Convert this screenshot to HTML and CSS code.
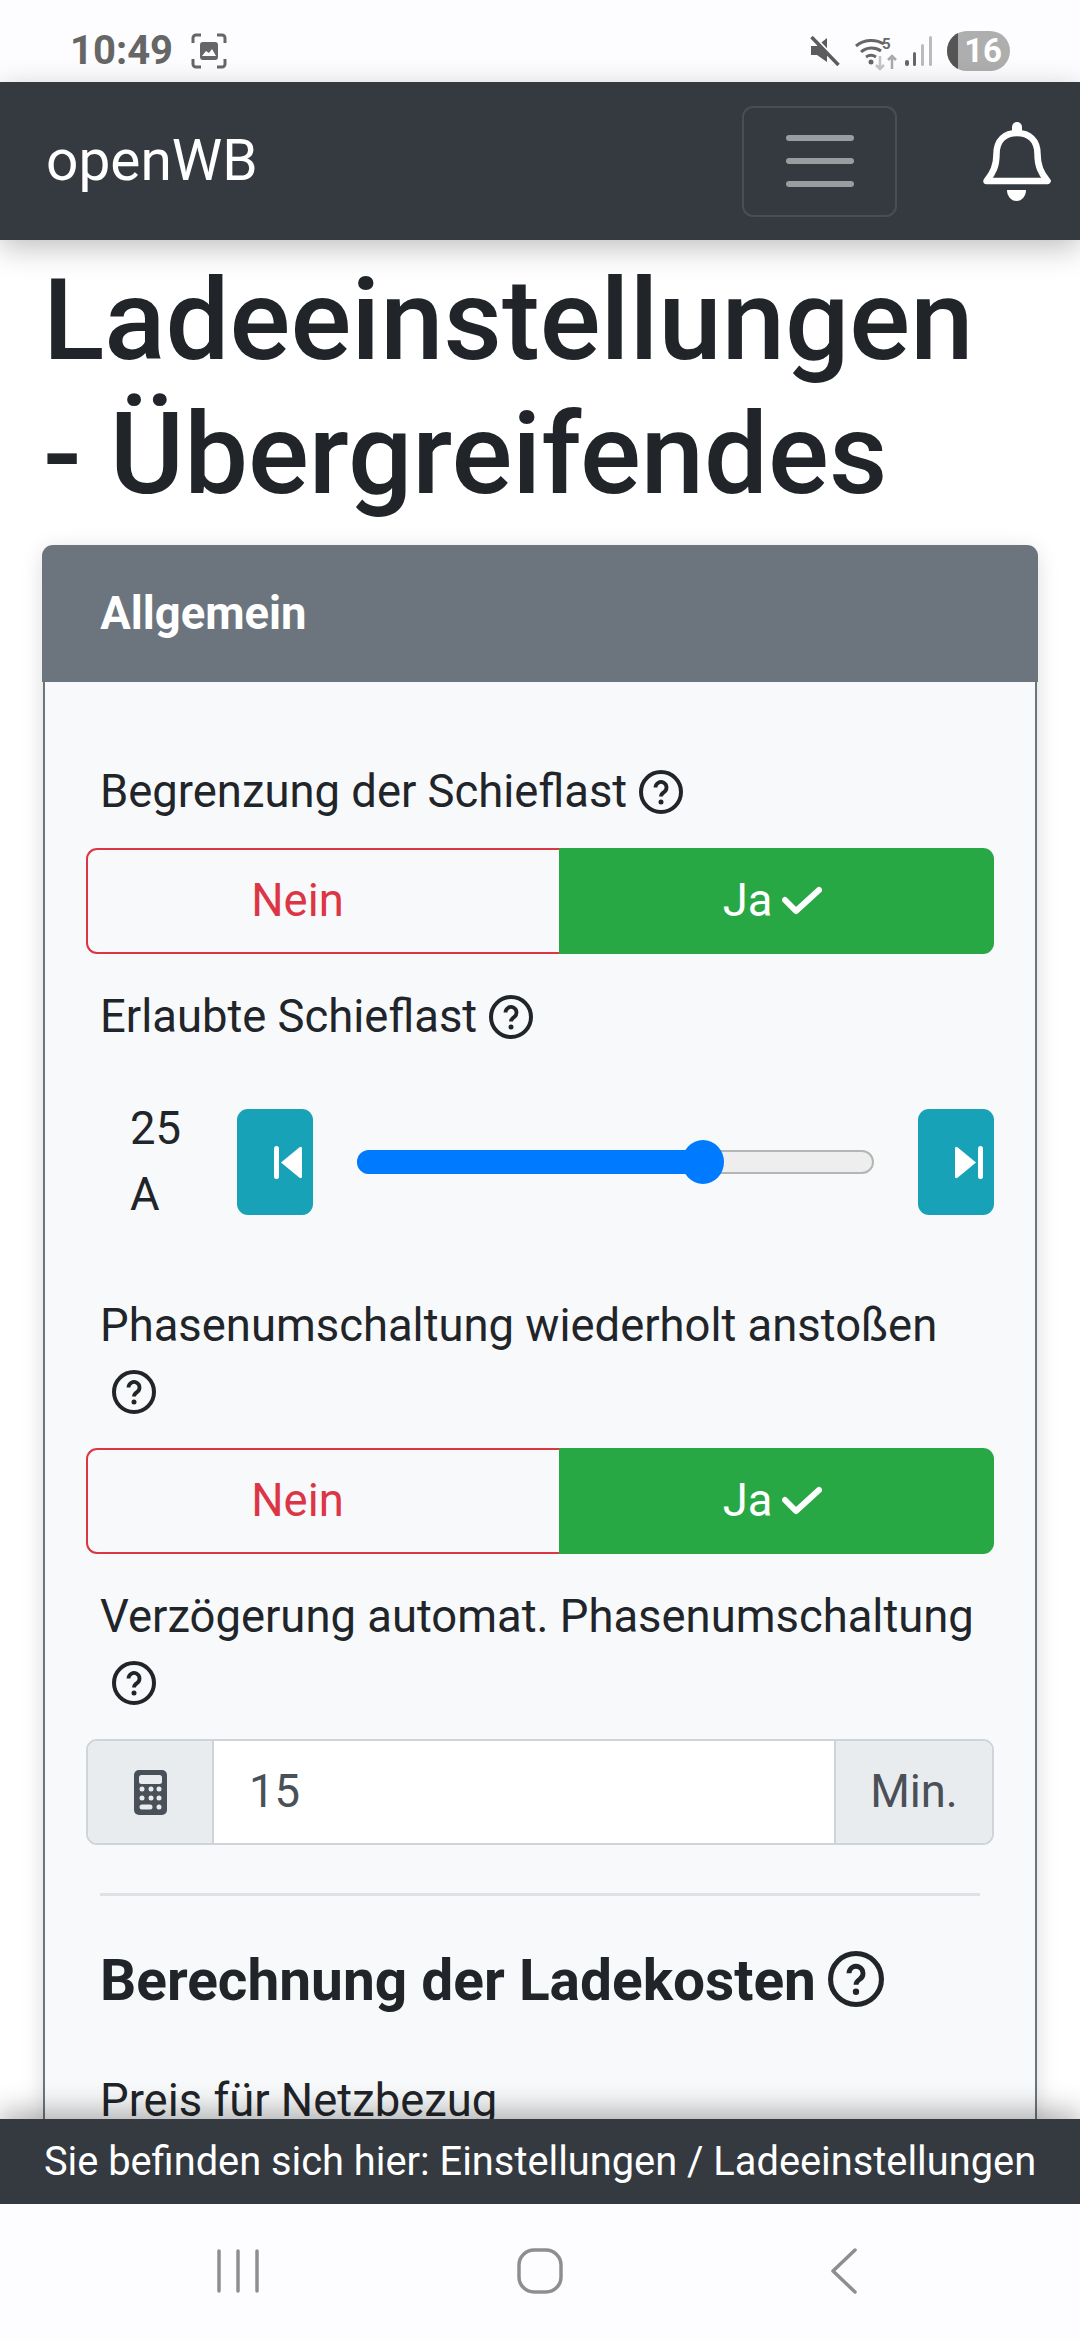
FILE: index.html
```html
<!DOCTYPE html>
<html lang="de">
<head>
    <meta charset="UTF-8">
    <meta name="viewport" content="width=device-width, initial-scale=1.0">
    <title>openWB</title>
    <link rel="stylesheet" href="styles.css">
</head>
<body>
<div class="screen">
    <!-- Statusleiste -->
    <div class="status-bar">
        <span class="time">10:49</span>
        <svg class="shot-icon" viewBox="0 0 36 36">
            <path d="M2 10V5a3 3 0 0 1 3-3h5M26 2h5a3 3 0 0 1 3 3v5M34 26v5a3 3 0 0 1-3 3h-5M10 34H5a3 3 0 0 1-3-3v-5" fill="none" stroke="#666" stroke-width="3"/>
            <rect x="9" y="9" width="18" height="18" rx="3" fill="#666"/>
            <path d="M11 23l4-5 3 2 3-4 4 7z" fill="#fdfcff"/>
        </svg>
        <span class="status-space"></span>
        <svg class="mute-icon" viewBox="0 0 30 30">
            <path d="M1 10h6l10-8v24L7 19H1z" fill="#5c5c5c"/>
            <path d="M3.500 0l26 28" stroke="#fdfcff" stroke-width="3"/>
            <path d="M1.500 1l27 28" stroke="#5c5c5c" stroke-width="3.500"/>
        </svg>
        <svg class="wifi-icon" viewBox="0 0 44 38">
            <path d="M1 12a24 24 0 0 1 28-2M6 18a16 16 0 0 1 20-1M11 23a9 9 0 0 1 10 0" fill="none" stroke="#666" stroke-width="3"/>
            <circle cx="16" cy="28" r="2.500" fill="#666"/>
            <text x="27" y="15" class="wifi-five">5</text>
            <path d="M25 22v13m-4-4l4 4 4-4" fill="none" stroke="#c4c4c4" stroke-width="2.500"/>
            <path d="M37 35V22m-4 4l4-4 4 4" fill="none" stroke="#aaa" stroke-width="2.500"/>
        </svg>
        <svg class="signal-icon" viewBox="0 0 28 32">
            <rect x="0" y="25" width="4" height="6" rx="2" fill="#666"/>
            <rect x="8" y="17" width="3" height="14" rx="1.500" fill="#666"/>
            <rect x="16" y="9" width="3" height="22" rx="1.500" fill="#bbb"/>
            <rect x="24" y="1" width="3" height="30" rx="1.500" fill="#bbb"/>
        </svg>
        <span class="battery"><span class="battery-level"></span>16</span>
    </div>

    <!-- Navigation -->
    <nav class="navbar">
        <span class="brand">openWB</span>
        <span class="toggler"><i></i><i></i><i></i></span>
        <svg class="bell" viewBox="0 0 68 79">
            <rect x="29" y="0" width="10" height="14" rx="5" fill="#fff"/>
            <path d="M3.500 59C10 51 13.500 44 13.500 32 13.500 18 22 11 34 11s20.500 7 20.500 21C54.500 44 58 51 64.500 59z" fill="none" stroke="#fff" stroke-width="6.500" stroke-linejoin="round"/>
            <path d="M24 68h19c0 6-4 11-9.500 11S24 74 24 68z" fill="#fff"/>
        </svg>
    </nav>

    <main class="content">
        <h1>Ladeeinstellungen - Übergreifendes</h1>

        <div class="card">
            <div class="card-header">Allgemein</div>
            <div class="card-body">
                <div class="label">Begrenzung der Schieflast<svg class="help" viewBox="0 0 44 44"><use href="#help-glyph"/></svg></div>
                <div class="btn-group">
                    <span class="btn btn-no">Nein</span>
                    <span class="btn btn-yes">Ja<svg class="check" viewBox="0 0 40 30"><path d="M3 14l11 11L37 4"/></svg></span>
                </div>

                <div class="label">Erlaubte Schieflast<svg class="help" viewBox="0 0 44 44"><use href="#help-glyph"/></svg></div>
                <div class="slider-row">
                    <div class="slider-value">25 A</div>
                    <span class="step-btn"><svg viewBox="0 0 28 33"><rect width="5" height="33" rx="2.500"/><path d="M7 16.500L25.500 1.200Q28 0 28 2.500v28q0 2.500-2.500 1.300z"/></svg></span>
                    <div class="slider">
                        <div class="slider-fill"></div>
                        <div class="slider-thumb"></div>
                    </div>
                    <span class="step-btn"><svg viewBox="0 0 28 33"><rect x="23" width="5" height="33" rx="2.500"/><path d="M21 16.500L2.500 1.200Q0 0 0 2.500v28q0 2.500 2.500 1.300z"/></svg></span>
                </div>

                <div class="label">Phasenumschaltung wiederholt anstoßen<svg class="help" viewBox="0 0 44 44"><use href="#help-glyph"/></svg></div>
                <div class="btn-group">
                    <span class="btn btn-no">Nein</span>
                    <span class="btn btn-yes">Ja<svg class="check" viewBox="0 0 40 30"><path d="M3 14l11 11L37 4"/></svg></span>
                </div>

                <div class="label">Verzögerung automat. Phasenumschaltung<svg class="help" viewBox="0 0 44 44"><use href="#help-glyph"/></svg></div>
                <div class="input-group">
                    <span class="addon addon-icon">
                        <svg class="calc" viewBox="0 0 33 45">
                            <rect width="33" height="45" rx="5" fill="#495057"/>
                            <rect x="5" y="5" width="23" height="9" rx="2.500" fill="#e9ecef"/>
                            <g fill="#e9ecef">
                                <circle cx="8" cy="19" r="2.500"/><circle cx="17" cy="19" r="2.500"/><circle cx="25" cy="19" r="2.500"/>
                                <circle cx="8" cy="28" r="2.500"/><circle cx="17" cy="28" r="2.500"/><circle cx="25" cy="28" r="2.500"/>
                                <rect x="5.500" y="34.500" width="13" height="5" rx="2.500"/><circle cx="25" cy="37" r="2.500"/>
                            </g>
                        </svg>
                    </span>
                    <span class="input-value">15</span>
                    <span class="addon addon-unit">Min.</span>
                </div>

                <hr>

                <h3>Berechnung der Ladekosten<svg class="help help-big" viewBox="0 0 44 44"><use href="#help-glyph"/></svg></h3>
                <div class="label label-last">Preis für Netzbezug</div>
            </div>
        </div>
    </main>

    <div class="breadcrumb">Sie befinden sich hier: Einstellungen / Ladeeinstellungen</div>

    <!-- Android Navigation -->
    <div class="system-nav">
        <svg class="nav-recent" viewBox="0 0 42 44"><path d="M2 2v40M21 2v40M40 2v40" stroke="#8e8e8e" stroke-width="3.500" stroke-linecap="round" fill="none"/></svg>
        <svg class="nav-home" viewBox="0 0 46 46"><rect x="2" y="2" width="42" height="42" rx="15" stroke="#8e8e8e" stroke-width="3.500" fill="none"/></svg>
        <svg class="nav-back" viewBox="0 0 30 46"><path d="M26 2L4 23l22 21" stroke="#8e8e8e" stroke-width="3.500" stroke-linecap="round" stroke-linejoin="round" fill="none"/></svg>
    </div>
</div>

<svg class="defs" aria-hidden="true">
    <defs>
        <g id="help-glyph">
            <circle cx="22" cy="22" r="20" fill="none" stroke="currentColor" stroke-width="4"/>
            <path d="M16.500 17.500a5.500 5.500 0 1 1 8.500 4.600c-2 1.400-3 2.400-3 4.400" fill="none" stroke="currentColor" stroke-width="3.800"/>
            <circle cx="22" cy="32" r="2.500" fill="currentColor"/>
        </g>
    </defs>
</svg>
</body>
</html>
```

FILE: styles.css
```css
* {
    box-sizing: border-box;
}

html, body {
    margin: 0;
    padding: 0;
}

body {
    font-family: Roboto, "Noto Sans", sans-serif;
    font-size: 45.4px;
    line-height: 66px;
    color: #212529;
    background-color: #fff;
}

.screen {
    width: 1080px;
    height: 2340px;
    display: flex;
    flex-direction: column;
    overflow: hidden;
}

.defs {
    display: none;
}

/* Statusleiste */
.status-bar {
    height: 82px;
    flex: none;
    display: flex;
    align-items: center;
    padding: 20px 70px 0 70px;
    background-color: #fdfcff;
}

.time {
    font-size: 40px;
    font-weight: 700;
    line-height: 40px;
    color: #666;
}

.shot-icon {
    width: 36px;
    height: 36px;
    margin-left: 18px;
}

.status-space {
    flex: 1;
}

.mute-icon {
    width: 30px;
    height: 30px;
}

.wifi-icon {
    width: 44px;
    height: 38px;
    margin-left: 15px;
    margin-top: 4px;
}

.wifi-five {
    font-size: 15px;
    font-weight: 700;
    fill: #666;
}

.signal-icon {
    width: 28px;
    height: 32px;
    margin-left: 6px;
}

.battery {
    position: relative;
    width: 63px;
    height: 40px;
    margin-left: 14px;
    border-radius: 20px;
    overflow: hidden;
    background-color: #aeaeae;
    color: #fff;
    font-size: 33px;
    font-weight: 700;
    line-height: 40px;
    text-align: right;
    padding-right: 8px;
}

.battery-level {
    position: absolute;
    left: 0;
    top: 0;
    bottom: 0;
    width: 11px;
    background-color: #555;
}

/* Navigation */
.navbar {
    height: 158px;
    flex: none;
    position: relative;
    z-index: 2;
    display: flex;
    align-items: center;
    padding-left: 46px;
    background-color: #343a40;
    box-shadow: 0 8px 28px rgba(0, 0, 0, 0.25);
}

.brand {
    font-size: 56.8px;
    line-height: 66px;
    color: #fff;
    flex: 1;
}

.toggler {
    width: 155px;
    height: 111px;
    display: flex;
    flex-direction: column;
    justify-content: center;
    align-items: center;
    gap: 17px;
    border: 2.75px solid rgba(255, 255, 255, 0.1);
    border-radius: 11px;
}

.toggler i {
    display: block;
    width: 68px;
    height: 6px;
    border-radius: 3px;
    background-color: rgba(255, 255, 255, 0.5);
}

.bell {
    width: 68px;
    height: 79px;
    margin-left: 86px;
    margin-right: 29px;
}

/* Inhalt */
.content {
    flex: 1 1 0;
    min-height: 0;
    overflow: hidden;
    padding: 14px 43px 0;
}

h1 {
    margin: 0 0 24px;
    font-size: 113.6px;
    font-weight: 500;
    line-height: 134px;
}

.card {
    border: 2.75px solid #6c757d;
    border-radius: 11px;
    background-color: #f8f9fa;
    box-shadow: 0 4px 22px rgba(0, 0, 0, 0.15);
}

.card-header {
    height: 137px;
    margin: -2.75px -2.75px 0;
    padding: 36px 58px;
    border-radius: 11px 11px 0 0;
    background-color: #6c757d;
    color: #fff;
    font-weight: 700;
}

.card-body {
    padding: 76px 41px 0;
}

.label {
    padding: 1px 14px 0;
    margin-bottom: 23px;
}

.help {
    display: inline-block;
    width: 44px;
    height: 44px;
    vertical-align: -7px;
    margin-left: 12px;
    color: #212529;
}

.btn-group {
    display: flex;
    height: 106px;
    margin-bottom: 29px;
}

.btn {
    display: flex;
    align-items: center;
    justify-content: center;
}

.btn-no {
    width: 473px;
    padding-right: 52px;
    border: 2.75px solid #dc3545;
    border-right: none;
    border-radius: 11px 0 0 11px;
    color: #dc3545;
}

.btn-yes {
    flex: 1;
    padding-right: 8px;
    border-radius: 0 11px 11px 0;
    background-color: #28a745;
    color: #fff;
}

.check {
    width: 40px;
    height: 30px;
    margin-left: 10px;
    fill: none;
    stroke: #fff;
    stroke-width: 6;
    stroke-linecap: round;
    stroke-linejoin: round;
}

/* Slider */
.slider-row {
    display: flex;
    align-items: center;
    margin-top: 46px;
    margin-bottom: 64px;
}

.slider-value {
    width: 151px;
    padding: 0 44px;
}

.step-btn {
    flex: none;
    width: 76px;
    height: 106px;
    display: flex;
    align-items: center;
    justify-content: flex-end;
    padding-right: 11px;
    border-radius: 11px;
    background-color: #17a2b8;
}

.step-btn svg {
    width: 28px;
    height: 33px;
    fill: #fff;
}

.slider {
    flex: 1;
    position: relative;
    height: 24px;
    margin: 0 44px;
    border: 2px solid #b5b5b5;
    border-radius: 12px;
    background-color: #eee;
}

.slider-fill {
    position: absolute;
    left: -2px;
    top: -2px;
    bottom: -2px;
    width: 66%;
    border-radius: 12px 0 0 12px;
    background-color: #007bff;
}

.slider-thumb {
    position: absolute;
    left: 63%;
    top: 50%;
    width: 42px;
    height: 44px;
    margin-top: -22px;
    border-radius: 50%;
    background-color: #007bff;
}

/* Eingabefeld */
.input-group {
    display: flex;
    height: 106px;
    margin-top: 2px;
    border: 2.75px solid #ced4da;
    border-radius: 11px;
    overflow: hidden;
    background-color: #fff;
    color: #495057;
}

.addon {
    display: flex;
    align-items: center;
    justify-content: center;
    background-color: #e9ecef;
}

.addon-icon {
    width: 126px;
    border-right: 2.75px solid #ced4da;
}

.calc {
    width: 33px;
    height: 45px;
}

.input-value {
    flex: 1;
    padding-left: 35px;
    line-height: 102px;
}

.addon-unit {
    width: 158px;
    border-left: 2.75px solid #ced4da;
}

hr {
    height: 2.75px;
    margin: 48px 14px 0;
    border: none;
    background-color: #dee2e6;
}

h3 {
    margin: 45px 14px 0;
    font-size: 56.8px;
    font-weight: 700;
    line-height: 80px;
}

.help-big {
    width: 56px;
    height: 56px;
    vertical-align: -7px;
}

.label-last {
    margin-top: 46px;
}

/* Fusszeile */
.breadcrumb {
    height: 85px;
    flex: none;
    position: relative;
    z-index: 2;
    display: flex;
    align-items: center;
    justify-content: center;
    background-color: #343a40;
    color: #fff;
    font-size: 39.8px;
    white-space: nowrap;
    box-shadow: 0 -8px 28px rgba(0, 0, 0, 0.3);
}

.system-nav {
    height: 136px;
    flex: none;
    position: relative;
    z-index: 3;
    display: flex;
    align-items: center;
    padding-left: 217px;
    padding-bottom: 3px;
    background-color: #fdfcff;
}

.nav-recent {
    width: 42px;
    height: 44px;
}

.nav-home {
    width: 46px;
    height: 46px;
    margin-left: 258px;
}

.nav-back {
    width: 30px;
    height: 46px;
    margin-left: 266px;
}
```
